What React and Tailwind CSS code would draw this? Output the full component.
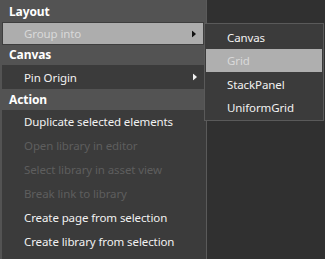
import React from "react";

const font = { fontFamily: '"Noto Sans", "Open Sans", sans-serif' };

const Arrow = ({ color }) => (
  <svg width="4" height="7" viewBox="0 0 4 7" className="absolute right-[7px] top-1/2 -translate-y-1/2">
    <path d="M0 0 L4 3.5 L0 7 Z" fill={color} />
  </svg>
);

const Header = ({ label, h }) => (
  <div className={`flex items-center pl-[9px] text-[12px] font-bold text-white ${h}`}>{label}</div>
);

const actions = [
  { label: "Duplicate selected elements", enabled: true },
  { label: "Open library in editor", enabled: false },
  { label: "Select library in asset view", enabled: false },
  { label: "Break link to library", enabled: false },
  { label: "Create page from selection", enabled: true },
  { label: "Create library from selection", enabled: true },
];

const subItems = ["Canvas", "Grid", "StackPanel", "UniformGrid"];

export default function App() {
  return (
    <div className="relative flex h-[259px] w-[325px] bg-[#303030] tracking-[-0.1px]" style={font}>
      <div className="flex h-full w-[207px] flex-col border-r border-[#5a5a5a] bg-[#535353]">
        <Header label="Layout" h="h-[22px] pt-[1px]" />
        <div className="flex h-[23px] px-[2px]">
          <div className="relative flex flex-1 items-center border border-[#3e3e3e] bg-[#adadad] pl-[21px] pt-[1px] text-[11.5px] text-[#d9d9d9]">
            Group into
            <Arrow color="#111111" />
          </div>
        </div>
        <Header label="Canvas" h="h-[20px]" />
        <div className="flex h-[24px] px-[2px]">
          <div className="relative flex flex-1 items-center bg-[#3b3b3b] pl-[22px] pt-[1px] text-[11.5px] text-[#f2f2f2]">
            Pin Origin
            <Arrow color="#f2f2f2" />
          </div>
        </div>
        <Header label="Action" h="h-[21px]" />
        <div className="ml-[2px] flex flex-1 flex-col bg-[#3b3b3b]">
          {actions.map((a) => (
            <div
              key={a.label}
              className={`flex h-6 items-center pl-[22px] text-[11.5px] ${a.enabled ? "text-[#f2f2f2]" : "text-[#5e5e5e]"}`}
            >
              {a.label}
            </div>
          ))}
        </div>
      </div>

      <div className="absolute left-[204px] top-[23px] flex w-[120px] flex-col border border-[#5a5a5a] bg-[#3b3b3b] py-[1px]">
        {subItems.map((s) => (
          <div key={s} className="flex h-[23.5px] px-[1px]">
            <div
              className={`flex flex-1 items-center pl-[21px] pt-[1px] text-[11.5px] ${s === "Grid" ? "bg-[#afafaf] text-[#d9d9d9]" : "text-[#f2f2f2]"}`}
            >
              {s}
            </div>
          </div>
        ))}
      </div>
    </div>
  );
}
